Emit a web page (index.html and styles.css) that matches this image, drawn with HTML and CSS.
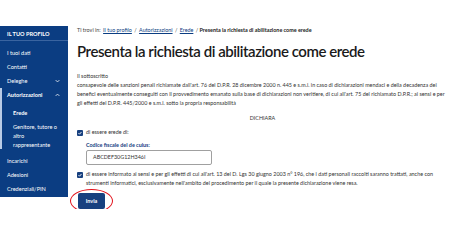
FILE: index.html
```html
<!DOCTYPE html>
<html lang="it">
<head>
  <meta charset="UTF-8">
  <title>Presenta la richiesta di abilitazione come erede</title>
  <link rel="stylesheet" href="styles.css">
</head>
<body>

  <div class="page">

    <!-- Menu laterale -->
    <nav class="sidebar">
      <div class="side-title">IL TUO PROFILO</div>
      <ul class="side-menu">
        <li>I tuoi dati</li>
        <li>Contatti</li>
        <li class="has-sub">Deleghe
          <svg class="chev" viewBox="0 0 8 5"><polyline points="1,1 4,4 7,1"/></svg>
        </li>
        <li class="group">
          <div class="has-sub open">Autorizzazioni
            <svg class="chev" viewBox="0 0 8 5"><polyline points="1,4 4,1 7,4"/></svg>
          </div>
          <ul class="sub-menu">
            <li class="active">Erede</li>
            <li class="multi">Genitore, tutore o altro rappresentante</li>
          </ul>
        </li>
        <li class="after-group">Incarichi</li>
        <li>Adesioni</li>
        <li>Credenziali/PIN</li>
      </ul>
    </nav>

    <main class="content">
      <div class="breadcrumb">
        Ti trovi in: <a href="#">Il tuo profilo</a> / <a href="#">Autorizzazioni</a> / <a href="#">Erede</a> / <b>Presenta la richiesta di abilitazione come erede</b>
      </div>

      <h1>Presenta la richiesta di abilitazione come erede</h1>

      <p class="lead">Il sottoscritto</p>
      <p class="text">consapevole delle sanzioni penali richiamate dall'art. 76 del D.P.R. 28 dicembre 2000 n. 445 e s.m.i. in caso di dichiarazioni mendaci e della decadenza dei benefici eventualmente conseguiti con il provvedimento emanato sulla base di dichiarazioni non veritiere, di cui all'art. 75 del richiamato D.P.R.; ai sensi e per gli effetti del D.P.R. 445/2000 e s.m.i. sotto la propria responsabilità</p>

      <div class="declare">DICHIARA</div>

      <div class="check">
        <span class="box"><svg viewBox="0 0 8 8"><polyline points="2,4.2 3.4,5.6 6,2.6"/></svg></span>
        <span>di essere erede di:</span>
      </div>

      <div class="field">
        <label>Codice fiscale del de cuius:</label>
        <div class="input">ABCDEF30G12H346I</div>
      </div>

      <div class="check second">
        <span class="box"><svg viewBox="0 0 8 8"><polyline points="2,4.2 3.4,5.6 6,2.6"/></svg></span>
        <span>di essere informato ai sensi e per gli effetti di cui all'art. 13 del D. Lgs 30 giugno 2003 n° 196, che i dati personali raccolti saranno trattati, anche con strumenti informatici, esclusivamente nell'ambito del procedimento per il quale la presente dichiarazione viene resa.</span>
      </div>

      <div class="actions">
        <button class="btn">Invia</button>
        <span class="circle"></span>
      </div>
    </main>

  </div>

</body>
</html>
```

FILE: styles.css
```css
body {
  margin: 0;
  background: #fff;
  font-family: 'Lato', 'Open Sans', sans-serif;
  color: #333;
}

.page {
  display: flex;
  align-items: flex-start;
}

/* Menu laterale */
.sidebar {
  width: 68px;
  margin-top: 26px;
  background: #0b3d82;
  color: #fff;
  font-size: 5.6px;
  padding-bottom: 1px;
  flex-shrink: 0;
}

.side-title {
  height: 15px;
  line-height: 15px;
  padding-left: 7px;
  font-weight: bold;
  border-bottom: 1px solid #3a64a0;
  box-sizing: border-box;
}

.side-menu,
.sub-menu {
  list-style: none;
  margin: 0;
  padding: 0;
}

.side-menu {
  padding-top: 5px;
}

.side-menu li,
.has-sub {
  height: 14px;
  line-height: 14px;
  padding-left: 7px;
  position: relative;
}

.side-menu li.group {
  height: auto;
  padding-left: 0;
  border-left: 2px solid #b9cbe6;
}

.group .has-sub {
  padding-left: 5px;
  font-weight: bold;
}

.chev {
  position: absolute;
  right: 8px;
  top: 5px;
  width: 5px;
  height: 4px;
  fill: none;
  stroke: #fff;
  stroke-width: 1.2;
}

.sub-menu {
  padding-top: 4px;
}

.sub-menu li {
  padding-left: 11px;
}

.sub-menu li.active {
  font-weight: bold;
}

.sub-menu li.multi {
  height: auto;
  line-height: 9px;
  padding-top: 2px;
  padding-right: 7px;
}

.side-menu li.after-group {
  margin-top: 5px;
}

/* Contenuto */
.content {
  flex: 1;
  padding: 25px 2px 0 9px;
  font-size: 5.4px;
}

.breadcrumb {
  color: #444;
  line-height: 10px;
}

.breadcrumb a {
  color: #0b3d82;
  text-decoration: underline;
  margin: 0 1px;
}

.breadcrumb b {
  color: #222;
}

h1 {
  margin: 6px 0 0;
  font-size: 15px;
  font-weight: 600;
  letter-spacing: -0.45px;
  color: #1a1a1a;
  line-height: 20px;
}

.lead {
  margin: 11px 0 0;
  line-height: 9px;
}

.text {
  margin: 0;
  line-height: 9px;
}

.declare {
  text-align: center;
  margin-top: 6px;
  line-height: 9px;
}

.check {
  display: flex;
  gap: 3px;
  line-height: 9px;
  margin-top: 5px;
}

.check.second {
  margin-top: 5px;
}

.box {
  flex-shrink: 0;
  width: 6px;
  height: 6px;
  margin-top: 1.5px;
  background: #17407f;
  border-radius: 1px;
}

.box svg {
  display: block;
  width: 6px;
  height: 6px;
  fill: none;
  stroke: #fff;
  stroke-width: 1.2;
}

.field {
  margin: 4px 0 0 9px;
}

.field label {
  display: block;
  font-weight: bold;
  color: #17407f;
  line-height: 9px;
}

.input {
  width: 126px;
  height: 15px;
  line-height: 13px;
  padding-left: 6px;
  border: 1px solid #a0a0a0;
  border-radius: 2px;
  box-sizing: border-box;
  color: #333;
}

.actions {
  position: relative;
  margin-top: 5px;
  width: 27px;
}

.btn {
  display: block;
  width: 27px;
  height: 16px;
  margin-left: 1px;
  padding: 0;
  border: none;
  border-radius: 2px;
  background: #17407f;
  color: #fff;
  font-family: inherit;
  font-size: 5.4px;
  font-weight: bold;
}

/* annotazione rossa sopra il pulsante */
.circle {
  position: absolute;
  left: -7px;
  top: -4px;
  width: 43px;
  height: 24px;
  border: 1.5px solid #e2101a;
  border-radius: 50%;
  box-sizing: border-box;
}
```
